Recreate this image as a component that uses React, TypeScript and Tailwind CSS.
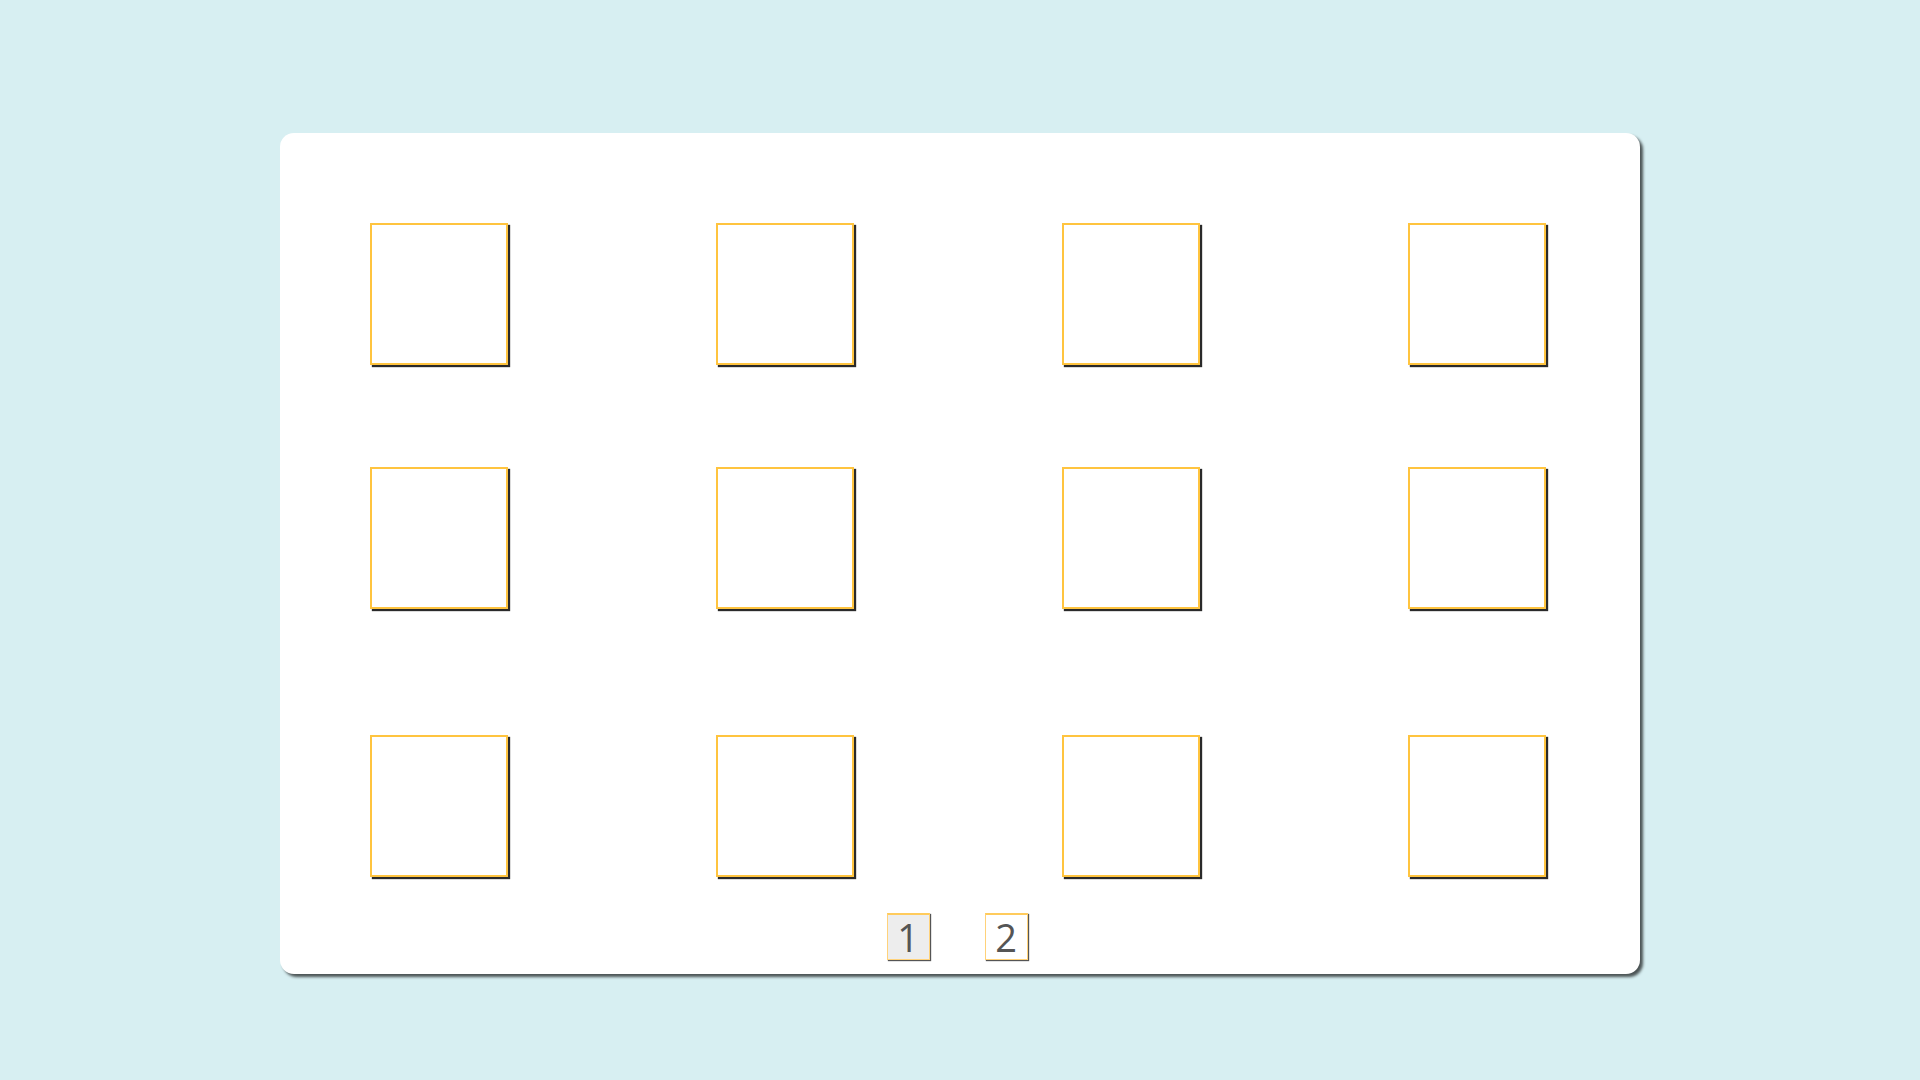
import React from 'react';

const rows = [
  { mt: 'mt-[90px]' },
  { mt: 'mt-[102px]' },
  { mt: 'mt-[126px]' },
];

const Box: React.FC = () => (
  <div className="w-[138px] h-[142px] bg-white border-2 border-[#ffc43f] shadow-[2px_2px_1px_#2a2a2a]" />
);

const PageButton: React.FC<{ label: string; active?: boolean }> = ({ label, active }) => (
  <div
    className={`w-[43px] h-[47px] flex items-center justify-center border border-[#ffd27a] border-t-2 border-t-[#ffcb5c] shadow-[1px_1px_1px_#555] text-[38px] leading-none text-[#555] ${
      active ? 'bg-[#ededed]' : 'bg-white'
    }`}
    style={{ fontFamily: '"Open Sans", "Noto Sans", sans-serif' }}
  >
    {label}
  </div>
);

export default function App() {
  return (
    <div className="w-[1920px] h-[1080px] bg-[#d7eff2] pt-[133px] overflow-hidden">
      <div className="mx-auto w-[1360px] h-[841px] bg-white rounded-[14px] shadow-[3px_3px_3px_rgba(0,0,0,0.65)] px-[90px] flex flex-col">
        {rows.map((r, i) => (
          <div key={i} className={`${r.mt} flex gap-[208px]`}>
            <Box />
            <Box />
            <Box />
            <Box />
          </div>
        ))}
        <div className="mt-[36px] flex justify-center gap-[55px] pr-[6px]">
          <PageButton label="1" active />
          <PageButton label="2" />
        </div>
      </div>
    </div>
  );
}
